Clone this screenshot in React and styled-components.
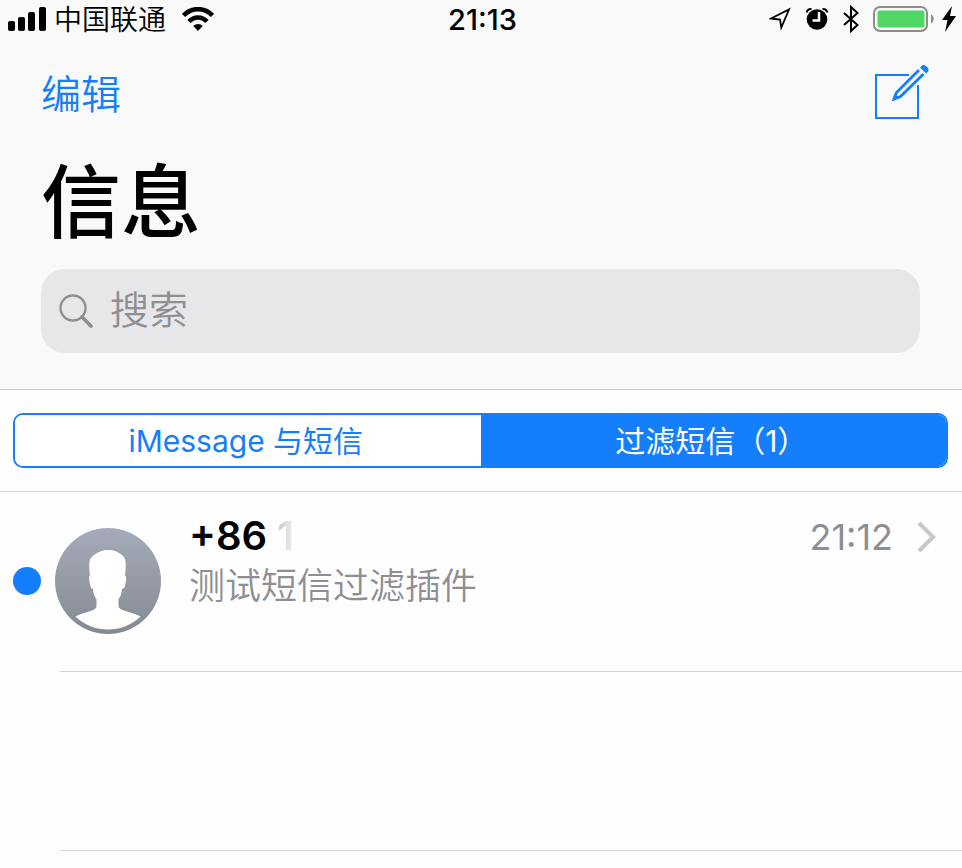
import React, { useState } from 'react';
import styled, { createGlobalStyle } from 'styled-components';

const BLUE = '#157efb';
const GRAY = '#8e8e93';
const LINE = '#d4d4d6';

const GlobalStyle = createGlobalStyle`
  * { box-sizing: border-box; }
  body {
    margin: 0;
    background: #fefefe;
    color: #000;
    font-family: Inter, "Noto Sans CJK SC", sans-serif;
  }
  button, input { font-family: inherit; }
  svg { display: block; flex: none; }
`;

const Header = styled.header`
  background: #f9f9f9;
  border-bottom: 1px solid #c8c8ca;
  padding-bottom: 36px;
`;

const StatusBar = styled.div`
  display: grid;
  grid-template-columns: 1fr auto 1fr;
  align-items: center;
  height: 36px;
  padding: 0 5px 0 8px;
`;

const StatusGroup = styled.div`
  display: flex;
  align-items: center;
  justify-content: ${(p) => (p.$end ? 'flex-end' : 'flex-start')};
  gap: ${(p) => (p.$end ? '14px' : '8px')};
`;

const Carrier = styled.span`
  font-size: 28px;
  font-weight: 350;
  line-height: 36px;
  margin-right: 8px;
  padding-top: 2px;
`;

const Clock = styled.time`
  font-size: 29px;
  font-weight: 550;
  line-height: 36px;
  padding-top: 2px;
`;

const Power = styled.div`
  display: flex;
  align-items: center;
  gap: 6px;
`;

const NavBar = styled.nav`
  display: flex;
  align-items: center;
  justify-content: space-between;
  height: 112px;
  padding: 0 32px 0 41px;
`;

const TextButton = styled.button`
  border: 0;
  padding: 6px 0 0;
  background: none;
  color: ${BLUE};
  font-size: 40px;
  font-weight: 350;
  line-height: 56px;
`;

const IconButton = styled.button`
  border: 0;
  padding: 0;
  background: none;
`;

const Title = styled.h1`
  margin: 0;
  padding: 0 41px;
  font-size: 80px;
  font-weight: 500;
  line-height: 108px;
`;

const SearchField = styled.label`
  display: flex;
  align-items: center;
  gap: 16px;
  height: 84px;
  margin: 13px 42px 0 41px;
  padding: 0 18px;
  border-radius: 24px;
  background: #e7e7e9;
`;

const SearchInput = styled.input`
  flex: 1;
  min-width: 0;
  border: 0;
  outline: 0;
  padding: 0 0 2px;
  background: none;
  font-size: 39px;
  font-weight: 350;
  line-height: 56px;
  &::placeholder { color: ${GRAY}; opacity: 1; }
`;

const FilterBar = styled.div`
  padding: 23px 14px 23px 13px;
  border-bottom: 1px solid ${LINE};
`;

const Segments = styled.div`
  display: flex;
  height: 55px;
  overflow: hidden;
  border: 2px solid ${BLUE};
  border-radius: 10px;
`;

const Segment = styled.button`
  flex: 1;
  border: 0;
  padding: 0 4px 0 0;
  background: ${(p) => (p.$active ? BLUE : '#fff')};
  color: ${(p) => (p.$active ? '#fff' : BLUE)};
  font-size: 30px;
  font-weight: 390;
  line-height: 50px;
`;

const List = styled.ul`
  margin: 0;
  padding: 0;
  list-style: none;
`;

const Item = styled.li`
  height: ${(p) => (p.$empty ? '178px' : 'auto')};
`;

const Divider = styled.hr`
  height: 1px;
  margin: 0 0 0 60px;
  border: 0;
  background: ${LINE};
`;

const Conversation = styled.a`
  display: flex;
  align-items: flex-start;
  min-height: 179px;
  padding: 20px 26px 36px 13px;
  color: inherit;
  text-decoration: none;
`;

const Identity = styled.div`
  display: flex;
  align-items: center;
  gap: 14px;
  margin: 16px 28px 0 0;
`;

const Unread = styled.span`
  width: 28px;
  height: 28px;
  border-radius: 50%;
  background: ${BLUE};
`;

const Message = styled.div`
  flex: 1;
  min-width: 0;
`;

const Sender = styled.div`
  font-size: 40px;
  font-weight: 600;
  line-height: 48px;
`;

const Hidden = styled.span`
  background: linear-gradient(90deg, #c4c4c4, #f0f0f0);
  background-clip: text;
  -webkit-background-clip: text;
  color: transparent;
`;

const Preview = styled.p`
  margin: 0;
  color: ${GRAY};
  font-size: 36px;
  font-weight: 350;
  line-height: 52px;
`;

const Meta = styled.div`
  display: flex;
  align-items: center;
  gap: 24px;
  height: 50px;
  color: ${GRAY};
  font-size: 36px;
  font-weight: 390;
`;

const Signal = () => (
  <svg width="38" height="24" viewBox="0 0 38 24" aria-hidden="true">
    <rect x="0" y="14" width="7" height="10" rx="2" />
    <rect x="10" y="10" width="7" height="14" rx="2" />
    <rect x="20" y="5" width="7" height="19" rx="2" />
    <rect x="31" y="0" width="7" height="24" rx="2" />
  </svg>
);

const Wifi = () => (
  <svg width="32" height="24" viewBox="0 0 32 24" fill="none" stroke="#000" strokeWidth="4.500" aria-hidden="true">
    <path d="M1.500 8.500C9.500 0 22.500 0 30.500 8.500" />
    <path d="M7 14.500c5-5.500 13-5.500 18 0" />
    <path d="M11.300 19c2.600-2.700 6.800-2.700 9.400 0L16 24z" fill="#000" stroke="none" />
  </svg>
);

const Location = () => (
  <svg width="22" height="24" viewBox="0 0 22 24" fill="none" stroke="#000" strokeWidth="1.800" aria-hidden="true">
    <path d="M2 11.500 20 2.500 12.300 20.500 11 12.500z" />
  </svg>
);

const Alarm = () => (
  <svg width="24" height="24" viewBox="0 0 24 24" aria-hidden="true">
    <circle cx="12" cy="12.500" r="10.300" />
    <path d="M1.800 5.500C2 3 4 1.800 6.500 1.900M22.200 5.500C22 3 20 1.800 17.500 1.900" fill="none" stroke="#000" strokeWidth="2" />
    <path d="M14 5V13.500H7.500" fill="none" stroke="#fff" strokeWidth="2.500" />
  </svg>
);

const Bluetooth = () => (
  <svg width="16" height="28" viewBox="0 0 16 28" fill="none" stroke="#000" strokeWidth="2" aria-hidden="true">
    <path d="M1 8 14.500 20 8 26V2L14.500 8 1 20" />
  </svg>
);

const Battery = () => (
  <svg width="62" height="26" viewBox="0 0 62 26" aria-hidden="true">
    <rect x="1" y="1" width="53" height="24" rx="6" fill="none" stroke="#8c8c8c" strokeWidth="2" />
    <rect x="4.500" y="4.500" width="47" height="17" rx="2" fill="#4fd964" />
    <path d="M58 8.500c3.500 1.500 3.500 7.500 0 9z" fill="#8c8c8c" />
  </svg>
);

const Bolt = () => (
  <svg width="16" height="26" viewBox="0 0 16 26" aria-hidden="true">
    <path d="M11 0 1 14H6.500L4 26 15 10H9z" />
  </svg>
);

const Compose = () => (
  <svg width="56" height="56" viewBox="0 0 56 56" fill="none" stroke={BLUE} strokeWidth="2" aria-hidden="true">
    <path d="M35 11H2V54H44V21" />
    <path d="M45 6 22.500 28.500 20 35 26.500 32.500 49.500 10" strokeWidth="2.800" />
    <path d="M18.500 36.500 20.500 29.500 25.500 34z" fill={BLUE} stroke="none" />
    <path d="M46 3.500 48 1.500C50.500-.5 56.500 5 54 7.500L52 9.500z" fill={BLUE} stroke="none" />
  </svg>
);

const Magnifier = () => (
  <svg width="35" height="35" viewBox="0 0 35 35" fill="none" stroke={GRAY} aria-hidden="true">
    <circle cx="14" cy="14" r="12.500" strokeWidth="2.300" />
    <path d="M23 23 32 32" strokeWidth="3.800" strokeLinecap="round" />
  </svg>
);

const Avatar = () => (
  <svg width="106" height="106" viewBox="0 0 106 106" role="img" aria-label="联系人">
    <defs>
      <linearGradient id="avatar-fill" x1="0" y1="0" x2="0" y2="1">
        <stop offset="0" stopColor="#a5abb9" />
        <stop offset="1" stopColor="#858992" />
      </linearGradient>
    </defs>
    <circle cx="53" cy="53" r="53" fill="url(#avatar-fill)" />
    <path
      fill="#fff"
      d="M53 22C47 22 43 24 39 27C34 30 33.500 35 35 47.500C33.500 48 34 52 35.500 58C36 61 37 60.500 38 61C38.500 66 39.500 69 41.500 71V77C41.500 80 40.500 81 37 82.500C31 85 25 85.500 20.500 88.500C29 97 41 101.500 53 101.500C65 101.500 77 97 85.500 88.500C81 85.500 75 85 69 82.500C65 81 63.500 80 63.500 77V71C65.500 69 66.500 66 67 61C69 60.500 69.500 60 70 58C71.500 52 71.500 48 70 47.500C71.500 35 71 30 67 27C63 24 60 22 53 22z"
    />
  </svg>
);

const Chevron = () => (
  <svg width="19" height="32" viewBox="0 0 19 32" fill="none" stroke="#c7c7cc" strokeWidth="4" aria-hidden="true">
    <path d="M2 2 16 16 2 30" />
  </svg>
);

const tabs = ['iMessage 与短信', '过滤短信（1）'];

export default function App() {
  const [active, setActive] = useState(1);
  return (
    <>
      <GlobalStyle />
      <Header>
        <StatusBar>
          <StatusGroup>
            <Signal />
            <Carrier>中国联通</Carrier>
            <Wifi />
          </StatusGroup>
          <Clock>21:13</Clock>
          <StatusGroup $end>
            <Location />
            <Alarm />
            <Bluetooth />
            <Power>
              <Battery />
              <Bolt />
            </Power>
          </StatusGroup>
        </StatusBar>
        <NavBar>
          <TextButton type="button">编辑</TextButton>
          <IconButton type="button" aria-label="新信息">
            <Compose />
          </IconButton>
        </NavBar>
        <Title>信息</Title>
        <SearchField>
          <Magnifier />
          <SearchInput type="text" placeholder="搜索" aria-label="搜索" />
        </SearchField>
      </Header>
      <main>
        <FilterBar>
          <Segments>
            {tabs.map((label, i) => (
              <Segment key={label} type="button" $active={i === active} aria-pressed={i === active} onClick={() => setActive(i)}>
                {label}
              </Segment>
            ))}
          </Segments>
        </FilterBar>
        <List>
          <Item>
            <Conversation href="#conversation">
              <Identity>
                <Unread />
                <Avatar />
              </Identity>
              <Message>
                <Sender>
                  +86 <Hidden>1</Hidden>
                </Sender>
                <Preview>测试短信过滤插件</Preview>
              </Message>
              <Meta>
                <time>21:12</time>
                <Chevron />
              </Meta>
            </Conversation>
            <Divider />
          </Item>
          <Item $empty />
        </List>
        <Divider />
      </main>
    </>
  );
}
